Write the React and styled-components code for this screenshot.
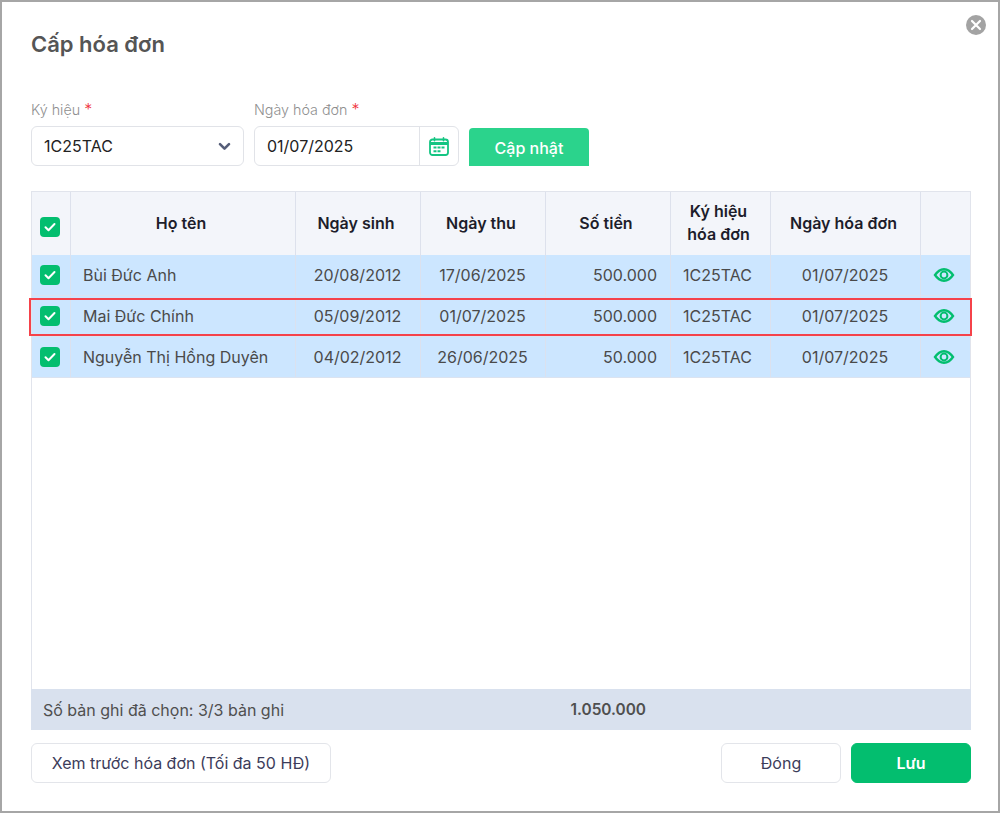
import React from "react";
import styled, { createGlobalStyle } from "styled-components";

const GlobalStyle = createGlobalStyle`
  html, body {
    margin: 0;
    padding: 0;
    background: #fff;
  }
  body {
    font-family: Inter, "Noto Sans", "Liberation Sans", sans-serif;
    font-size: 16px;
    color: #4a4a4a;
  }
`;

const COLUMNS = "39px 225px 125px 125px 125px 100px 150px 1fr";

const rows = [
  { name: "Bùi Đức Anh", birth: "20/08/2012", paid: "17/06/2025", amount: "500.000" },
  { name: "Mai Đức Chính", birth: "05/09/2012", paid: "01/07/2025", amount: "500.000" },
  { name: "Nguyễn Thị Hồng Duyên", birth: "04/02/2012", paid: "26/06/2025", amount: "50.000" },
];

const Dialog = styled.div`
  position: relative;
  box-sizing: border-box;
  width: 1000px;
  height: 813px;
  border: 2px solid #a6a6a6;
  padding: 0 27px 28px 29px;
  display: flex;
  flex-direction: column;
  background: #fff;
`;

const Title = styled.h2`
  margin: 0;
  padding-top: 27px;
  height: 62px;
  box-sizing: border-box;
  font-size: 22px;
  line-height: 30px;
  font-weight: 600;
  color: #555;
`;

const CloseButton = styled.button`
  position: absolute;
  top: 13px;
  right: 12px;
  width: 20px;
  height: 20px;
  padding: 0;
  border: 0;
  border-radius: 50%;
  background: #a3a3a3;
  display: flex;
  align-items: center;
  justify-content: center;
`;

const FilterRow = styled.div`
  margin-top: 32px;
  display: flex;
  gap: 10px;
  align-items: flex-end;
`;

const Field = styled.div`
  width: ${(p) => p.$width}px;
`;

const Label = styled.div`
  height: 30px;
  font-size: 14.3px;
  line-height: 27px;
  color: #8f8f8f;
  font-weight: 300;

  span {
    color: #f0303a;
    font-size: 16px;
  }
`;

const InputBox = styled.div`
  box-sizing: border-box;
  height: 40px;
  border: 1px solid #e1e3e8;
  border-radius: 6px;
  display: flex;
  align-items: center;
  font-size: 16px;
  color: #222;
`;

const InputValue = styled.div`
  flex: 1;
  padding-left: 12px;
`;

const CaretWrap = styled.div`
  width: 37px;
  display: flex;
  align-items: center;
  justify-content: center;
`;

const CalendarWrap = styled.div`
  width: 38px;
  height: 100%;
  border-left: 1px solid #e1e3e8;
  display: flex;
  align-items: center;
  justify-content: center;
`;

const UpdateButton = styled.button`
  width: 120px;
  height: 38px;
  padding: 2px 0 0;
  border: 0;
  border-radius: 4px 4px 0 0;
  background: #2bd38c;
  color: #fff;
  font: 500 16px Inter, sans-serif;
`;

const Table = styled.div`
  position: relative;
  margin-top: 25px;
  flex: 1;
  min-height: 0;
  border: 1px solid #e1e4ec;
  border-bottom: 0;
  display: flex;
  flex-direction: column;
`;

const HeaderRow = styled.div`
  display: grid;
  grid-template-columns: ${COLUMNS};
  height: 63px;
  background: #f3f5fa;
`;

const HeaderCell = styled.div`
  box-sizing: border-box;
  padding: 0 4px 1px 0;
  display: flex;
  align-items: center;
  justify-content: center;
  text-align: center;
  font-size: 16px;
  line-height: 23px;
  font-weight: 600;
  color: #1d1d2b;
  border-right: 1px solid #dde1ec;
  &:last-child { border-right: 0; }
`;

const HeaderCheckCell = styled(HeaderCell)`
  padding: 7px 2px 0 0;
`;

const BodyArea = styled.div`
  flex: 1;
`;

const Row = styled.div`
  display: grid;
  grid-template-columns: ${COLUMNS};
  height: 41px;
  box-sizing: border-box;
  background: #cce6ff;
  border-bottom: 1px solid #dbe3f0;
`;

const Cell = styled.div`
  display: flex;
  align-items: center;
  justify-content: ${(p) => p.$align || "center"};
  padding: 0 13px 0 12px;
  font-size: 16px;
  color: #4a4a4a;
  border-right: 1px solid #dbe1ee;
  white-space: nowrap;
  &:last-child { border-right: 0; }
`;

const CheckCell = styled(Cell)`
  padding: 0 2px 0 0;
`;

const EyeCell = styled(Cell)`
  padding: 0 4px 0 0;
`;

const CheckBox = styled.div`
  width: 20px;
  height: 20px;
  border-radius: 4px;
  background: #03be6f;
  display: flex;
  align-items: center;
  justify-content: center;
`;

// red annotation drawn over the second row
const Highlight = styled.div`
  position: absolute;
  left: -3px;
  right: -2px;
  top: 106px;
  height: 38px;
  border: 2px solid #f5424a;
  box-sizing: border-box;
  pointer-events: none;
`;

const FooterRow = styled.div`
  display: grid;
  grid-template-columns: 515px 100px 1fr;
  height: 41px;
  align-items: center;
  background: #d9e1ee;
  font-size: 16px;
  color: #4f4f4f;
  margin: 0 -1px;
`;

const FooterLabel = styled.div`
  padding-left: 12px;
`;

const FooterTotal = styled.div`
  text-align: right;
  font-size: 15.4px;
  font-weight: 600;
`;

const Actions = styled.div`
  margin-top: 13px;
  display: flex;
  gap: 10px;
`;

const Button = styled.button`
  width: ${(p) => p.$width || 120}px;
  height: 40px;
  box-sizing: border-box;
  border-radius: 6px;
  border: 1px solid ${(p) => (p.$primary ? "#03be6f" : "#e3e5ea")};
  background: ${(p) => (p.$primary ? "#03be6f" : "#fff")};
  color: ${(p) => (p.$primary ? "#fff" : "#3c3c5a")};
  font: ${(p) => (p.$primary ? 600 : 400)} 16px Inter, sans-serif;
  &:first-child { margin-right: auto; }
`;

const CloseIcon = () => (
  <svg width="12" height="12" viewBox="0 0 12 12" fill="none" stroke="#fff" strokeWidth="2.2" strokeLinecap="round">
    <path d="M2 2l8 8M10 2l-8 8" />
  </svg>
);

const Caret = () => (
  <svg width="13" height="9" viewBox="0 0 13 9" fill="none" stroke="#555d78" strokeWidth="2.6" strokeLinecap="round" strokeLinejoin="round">
    <path d="M2 2.200l4.500 4.500 4.500-4.500" />
  </svg>
);

const CalendarIcon = () => (
  <svg width="20" height="19" viewBox="0 0 20 19" fill="none">
    <rect x="1" y="2.500" width="18" height="15.500" rx="2.500" stroke="#14c582" strokeWidth="1.800" />
    <path d="M1 6.500h18" stroke="#14c582" strokeWidth="3" />
    <path d="M5.500 .8v3M14.500 .8v3" stroke="#14c582" strokeWidth="1.600" strokeLinecap="round" />
    <path d="M4.500 10.500h3M8.500 10.500h3M12.500 10.500h3M4.500 14.200h3M8.500 14.200h3" stroke="#14c582" strokeWidth="2" />
  </svg>
);

const CheckIcon = () => (
  <svg width="12" height="10" viewBox="0 0 12 10" fill="none" stroke="#fff" strokeWidth="2" strokeLinecap="round" strokeLinejoin="round">
    <path d="M1.500 5.200l3 3 6-6.200" />
  </svg>
);

const EyeIcon = () => (
  <svg width="22" height="14" viewBox="0 0 22 14" fill="none">
    <path
      fillRule="evenodd"
      fill="#03be6f"
      d="M.5 7C3.500 2.500 7 0 11 0s7.500 2.500 10.500 7c-3 4.500-6.500 7-10.500 7S3.500 11.500 .5 7zM3.500 7C5.500 9.700 8 11.500 11 11.500S16.500 9.700 18.500 7C16.500 4.300 14 2.500 11 2.500S5.500 4.300 3.500 7z"
    />
    <circle cx="11" cy="7" r="3.400" stroke="#03be6f" strokeWidth="2" />
  </svg>
);

const Check = () => (
  <CheckBox>
    <CheckIcon />
  </CheckBox>
);

const App = () => (
  <>
    <GlobalStyle />
    <Dialog>
      <Title>Cấp hóa đơn</Title>
      <CloseButton aria-label="Đóng">
        <CloseIcon />
      </CloseButton>

      <FilterRow>
        <Field $width={213}>
          <Label>
            Ký hiệu <span>*</span>
          </Label>
          <InputBox>
            <InputValue>1C25TAC</InputValue>
            <CaretWrap>
              <Caret />
            </CaretWrap>
          </InputBox>
        </Field>
        <Field $width={205}>
          <Label>
            Ngày hóa đơn <span>*</span>
          </Label>
          <InputBox>
            <InputValue>01/07/2025</InputValue>
            <CalendarWrap>
              <CalendarIcon />
            </CalendarWrap>
          </InputBox>
        </Field>
        <UpdateButton>Cập nhật</UpdateButton>
      </FilterRow>

      <Table>
        <HeaderRow>
          <HeaderCheckCell>
            <Check />
          </HeaderCheckCell>
          <HeaderCell>Họ tên</HeaderCell>
          <HeaderCell>Ngày sinh</HeaderCell>
          <HeaderCell>Ngày thu</HeaderCell>
          <HeaderCell>Số tiền</HeaderCell>
          <HeaderCell>
            Ký hiệu
            <br />
            hóa đơn
          </HeaderCell>
          <HeaderCell>Ngày hóa đơn</HeaderCell>
          <HeaderCell />
        </HeaderRow>
        <BodyArea>
          {rows.map((row) => (
            <Row key={row.name}>
              <CheckCell>
                <Check />
              </CheckCell>
              <Cell $align="flex-start">{row.name}</Cell>
              <Cell>{row.birth}</Cell>
              <Cell>{row.paid}</Cell>
              <Cell $align="flex-end">{row.amount}</Cell>
              <Cell $align="flex-start">1C25TAC</Cell>
              <Cell>01/07/2025</Cell>
              <EyeCell>
                <EyeIcon />
              </EyeCell>
            </Row>
          ))}
        </BodyArea>
        <Highlight />
        <FooterRow>
          <FooterLabel>Số bản ghi đã chọn: 3/3 bản ghi</FooterLabel>
          <FooterTotal>1.050.000</FooterTotal>
        </FooterRow>
      </Table>

      <Actions>
        <Button $width={300}>Xem trước hóa đơn (Tối đa 50 HĐ)</Button>
        <Button>Đóng</Button>
        <Button $primary>Lưu</Button>
      </Actions>
    </Dialog>
  </>
);

export default App;
